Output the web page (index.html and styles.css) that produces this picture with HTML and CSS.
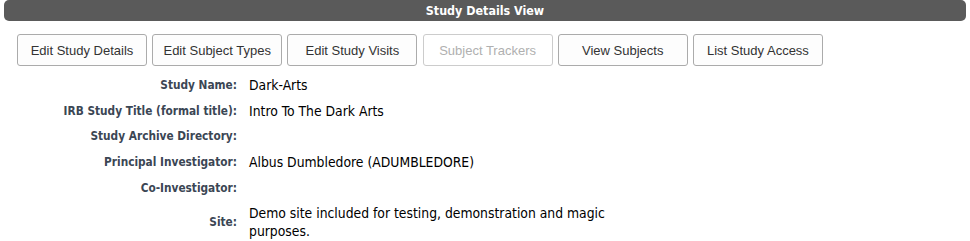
FILE: index.html
```html
<!DOCTYPE html>
<html>
<head>
<meta charset="utf-8">
<link rel="stylesheet" href="styles.css">
</head>
<body>
<div class="page">
  <div class="titlebar">Study Details View</div>
  <div class="actions">
    <button class="btn">Edit Study Details</button>
    <button class="btn">Edit Subject Types</button>
    <button class="btn">Edit Study Visits</button>
    <button class="btn disabled" disabled>Subject Trackers</button>
    <button class="btn">View Subjects</button>
    <button class="btn">List Study Access</button>
  </div>
  <div class="details">
    <div class="label">Study Name:</div><div class="value">Dark-Arts</div>
    <div class="label">IRB Study Title (formal title):</div><div class="value">Intro To The Dark Arts</div>
    <div class="label">Study Archive Directory:</div><div class="value"></div>
    <div class="label">Principal Investigator:</div><div class="value">Albus Dumbledore (ADUMBLEDORE)</div>
    <div class="label">Co-Investigator:</div><div class="value"></div>
    <div class="label">Site:</div><div class="value">Demo site included for testing, demonstration and magic purposes.</div>
  </div>
</div>
</body>
</html>
```
FILE: styles.css
```css
html, body {
  margin: 0;
  padding: 0;
  background: #ffffff;
}
.page {
  padding: 0 4px;
  font-family: "DejaVu Sans Condensed", "DejaVu Sans", sans-serif;
}
.titlebar {
  height: 21px;
  line-height: 21px;
  background: #5a5a5a;
  border-radius: 5px;
  color: #ffffff;
  font-weight: bold;
  font-size: 12.4px;
  text-align: center;
}
.actions {
  display: flex;
  gap: 5.2px;
  padding: 13px 0 0 13px;
}
.btn {
  width: 130px;
  height: 32px;
  margin: 0;
  padding: 0;
  border: 1px solid #ababab;
  border-radius: 3px;
  background: #fdfdfd;
  color: #333333;
  font-family: "Liberation Sans", Arial, sans-serif;
  font-size: 13px;
}
.btn.disabled {
  color: #b0b0b0;
  border-color: #cccccc;
  background: #ffffff;
}
.details {
  display: grid;
  grid-template-columns: 233px 380px;
  column-gap: 12px;
  padding-top: 6px;
}
.label, .value {
  display: flex;
  align-items: center;
  padding: 3.85px 0;
  line-height: 18px;
  min-height: 18px;
}
.label {
  justify-content: flex-end;
  text-align: right;
  font-weight: bold;
  font-size: 11.75px;
  color: #3b4654;
}
.value {
  font-size: 13.8px;
  color: #000000;
}
```
